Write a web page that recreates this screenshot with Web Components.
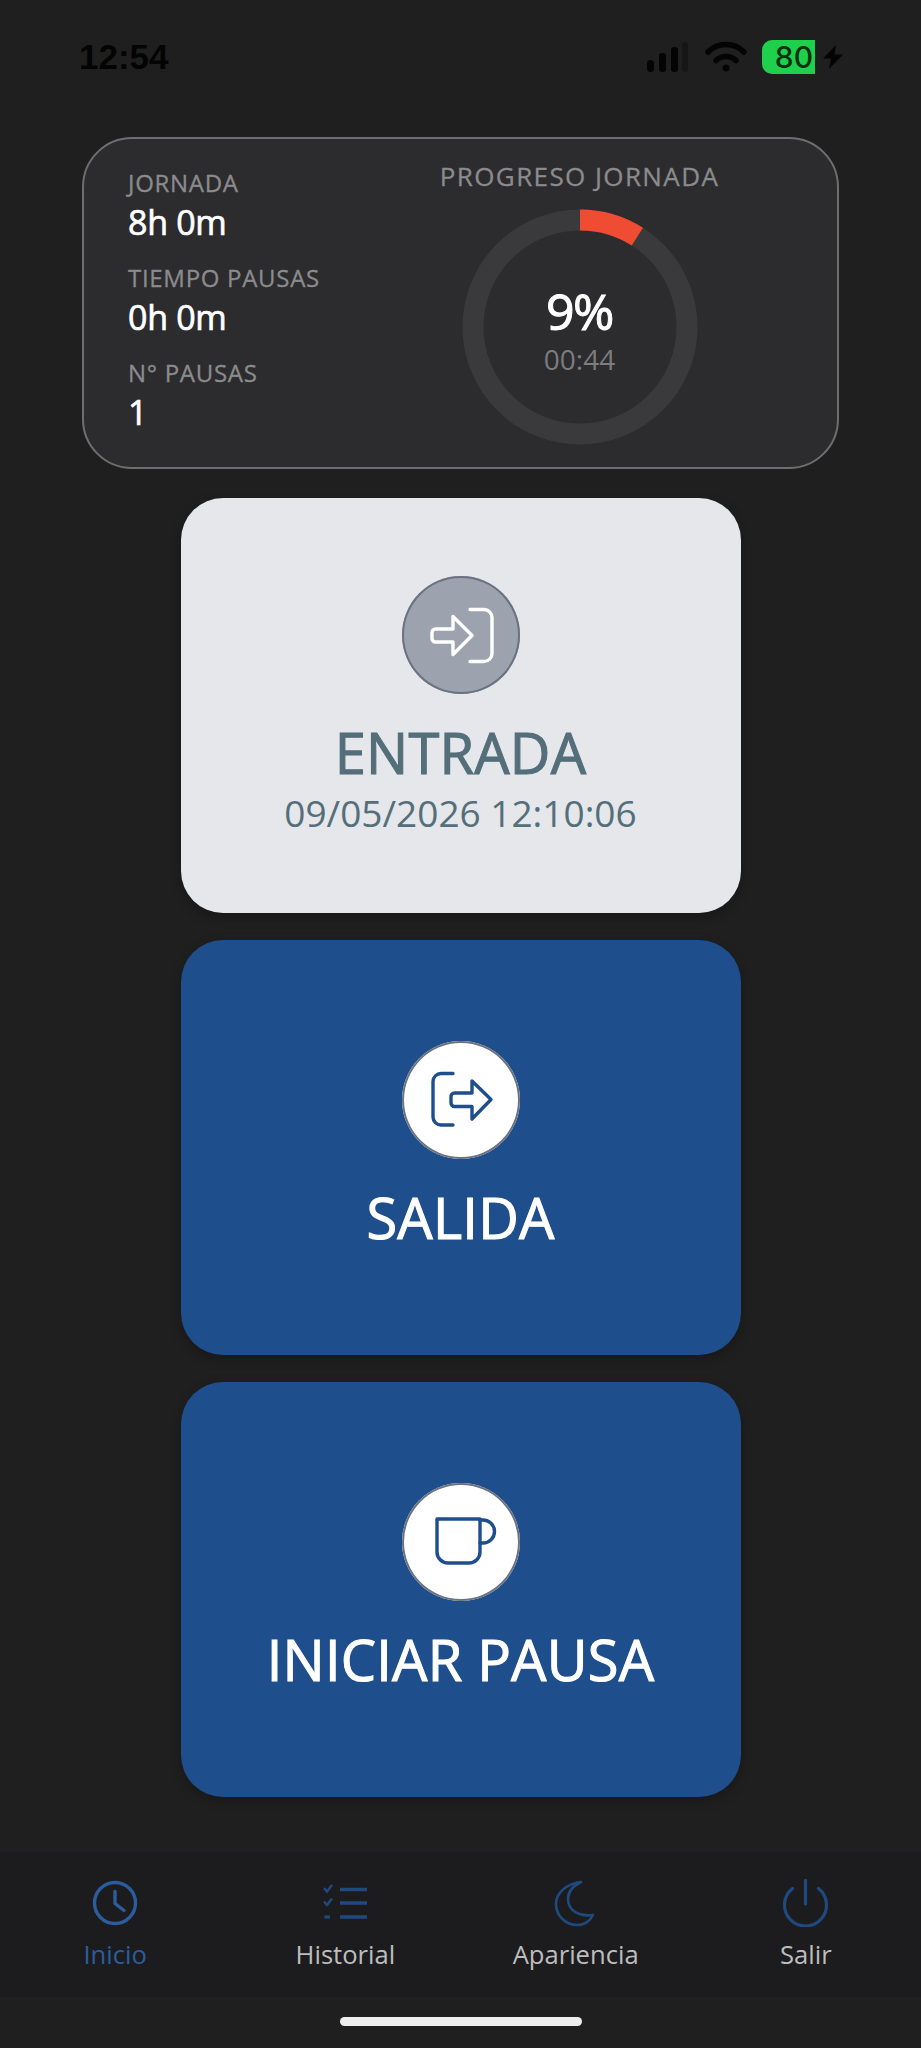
<!DOCTYPE html>
<html lang="es">
<head>
<meta charset="utf-8">
<title>Inicio</title>
<style>
  html, body { margin: 0; padding: 0; background: #1f1f1f; }
  body { font-family: "Open Sans", "Liberation Sans", sans-serif; }
</style>
</head>
<body>
<app-screen>
  <status-bar slot="status" time="12:54" battery="80"></status-bar>

  <summary-card>
    <stat-item label="JORNADA">8h 0m</stat-item>
    <stat-item label="TIEMPO PAUSAS">0h 0m</stat-item>
    <stat-item label="N° PAUSAS">1</stat-item>
    <progress-ring slot="progress" title-text="PROGRESO JORNADA" percent="9" elapsed="00:44"></progress-ring>
  </summary-card>

  <action-card tone="done" detail="09/05/2026 12:10:06">
    <svg slot="icon" width="118" height="118" viewBox="0 0 118 118" fill="none" stroke="#fff" stroke-width="3.4" stroke-linecap="round" stroke-linejoin="round">
      <path d="M33.5 53H51V40.5L70 59.5 51 78.500V66H33.500a3.500 3.500 0 0 1-3.500-3.500v-6a3.500 3.500 0 0 1 3.500-3.500Z"/>
      <path d="M68 33.500H82a8 8 0 0 1 8 8V77.500a8 8 0 0 1-8 8H68"/>
    </svg>
    ENTRADA
  </action-card>

  <action-card>
    <svg slot="icon" width="118" height="118" viewBox="0 0 118 118" fill="none" stroke="#1e4e8c" stroke-width="3.4" stroke-linecap="round" stroke-linejoin="round">
      <path d="M51 32.500H39a8 8 0 0 0-8 8V76a8 8 0 0 0 8 8H51"/>
      <path d="M52.500 52H70V40L89 58.500 70 78V65.500H52.500a3.500 3.500 0 0 1-3.500-3.500v-6.500a3.500 3.500 0 0 1 3.500-3.500Z"/>
    </svg>
    SALIDA
  </action-card>

  <action-card>
    <svg slot="icon" width="118" height="118" viewBox="0 0 118 118" fill="none" stroke="#1e4e8c" stroke-width="3.4" stroke-linecap="round" stroke-linejoin="round">
      <path d="M35 36H78V69a11 11 0 0 1-11 11H46a11 11 0 0 1-11-11Z"/>
      <path d="M78 37h3a11.500 11.500 0 0 1 0 23h-3"/>
    </svg>
    INICIAR PAUSA
  </action-card>

  <tab-bar slot="tabs">
    <nav-item active label="Inicio">
      <svg width="48" height="48" viewBox="0 0 48 48" fill="none" stroke="currentColor" stroke-width="3.4" stroke-linecap="round" stroke-linejoin="round">
        <circle cx="24" cy="24" r="20.500"/>
        <path d="M24 12.500V24.500L33 31.500"/>
      </svg>
    </nav-item>
    <nav-item label="Historial">
      <svg width="48" height="48" viewBox="0 0 48 48" fill="none" stroke="currentColor" stroke-width="3.4">
        <path d="M19 10.500H46M19 24H46M19 38H46"/>
        <path d="M3 9l3 3.500 5-6.500M3 22.500l3 3.500 5-6.500" stroke-width="2.400"/>
        <path d="M3.500 38H9" stroke-width="3"/>
      </svg>
    </nav-item>
    <nav-item label="Apariencia">
      <svg width="48" height="48" viewBox="0 0 48 48" fill="none" stroke="currentColor" stroke-width="2.600" stroke-linejoin="round">
        <path d="M29 3C14 5 4 14 4 25 4 37 14 46 25 46 32 46 38 42 41 36 28 38 16 32 16 20 16 13 21 7 29 3Z"/>
      </svg>
    </nav-item>
    <nav-item label="Salir">
      <svg width="48" height="48" viewBox="0 0 48 48" fill="none" stroke="currentColor" stroke-width="3.200" stroke-linecap="round">
        <path d="M10.500 9.500A21 21 0 1 0 36.500 9.500"/>
        <path d="M23.500 1.500V25"/>
      </svg>
    </nav-item>
  </tab-bar>
</app-screen>

<script>
class AppScreen extends HTMLElement {
  constructor() {
    super();
    this.attachShadow({ mode: 'open' });
    this.shadowRoot.innerHTML = `
      <style>
        :host {
          display: flex;
          flex-direction: column;
          width: 921px;
          height: 2048px;
          background: #1f1f1f;
          font-family: "Open Sans", "Liberation Sans", sans-serif;
        }
        .main {
          display: flex;
          flex-direction: column;
          align-items: center;
          gap: 27px;
        }
        .tabs {
          margin-top: auto;
        }
        .home {
          display: flex;
          justify-content: center;
          padding: 20px 0 22px;
        }
        .home span {
          width: 242px;
          height: 9px;
          border-radius: 5px;
          background: #eeeeee;
        }
      </style>
      <slot name="status"></slot>
      <div class="main"><slot></slot></div>
      <div class="tabs"><slot name="tabs"></slot></div>
      <div class="home"><span></span></div>`;
  }
}

class StatusBar extends HTMLElement {
  constructor() {
    super();
    this.attachShadow({ mode: 'open' });
    this.shadowRoot.innerHTML = `
      <style>
        :host {
          display: flex;
          justify-content: space-between;
          align-items: center;
          height: 113px;
          margin-bottom: 24px;
          padding: 0 78px 0 79px;
          color: #040404;
        }
        .time {
          font: 700 35px "Liberation Sans", Arial, sans-serif;
        }
        .icons {
          display: flex;
          align-items: center;
        }
        .battery {
          display: flex;
          justify-content: flex-end;
          align-items: center;
          box-sizing: border-box;
          width: 53px;
          height: 34px;
          margin: 0 8px 0 15px;
          padding-right: 2px;
          border-radius: 10px 0 0 10px;
          background: #1ed04c;
          color: #07300f;
          font: 500 30px Inter, sans-serif;
        }
        svg { display: block; }
      </style>
      <span class="time"></span>
      <div class="icons">
        <svg width="41" height="30" viewBox="0 0 41 30" fill="currentColor">
          <rect x="0" y="18" width="7" height="12" rx="3.500"/>
          <rect x="12" y="11" width="7" height="19" rx="3"/>
          <rect x="24" y="5" width="7" height="25" rx="3"/>
          <rect x="35" y="0" width="6" height="30" rx="3" opacity=".3"/>
        </svg>
        <svg style="margin-left:17px" width="42" height="31" viewBox="0 0 42 31" fill="none" stroke="currentColor" stroke-width="5.500" stroke-linecap="round">
          <path d="M3 11C12.500 1 29.500 1 39 11"/>
          <path d="M11 19.500C16.500 14 25.500 14 31 19.500"/>
          <circle cx="21" cy="27" r="3.500" fill="currentColor" stroke="none"/>
        </svg>
        <div class="battery"></div>
        <svg width="20" height="24" viewBox="0 0 20 24" fill="currentColor">
          <path d="M13 0L0 13.500H8L6 24 20 9.500H11.500Z"/>
        </svg>
      </div>`;
  }

  connectedCallback() {
    this.shadowRoot.querySelector('.time').textContent = this.getAttribute('time');
    this.shadowRoot.querySelector('.battery').textContent = this.getAttribute('battery');
  }
}

class SummaryCard extends HTMLElement {
  constructor() {
    super();
    this.attachShadow({ mode: 'open' });
    this.shadowRoot.innerHTML = `
      <style>
        :host {
          display: grid;
          grid-template-columns: 238px 1fr;
          box-sizing: border-box;
          width: 757px;
          height: 332px;
          margin-bottom: 2px;
          border: 2px solid #6e6e6e;
          border-radius: 50px;
          background: #2c2c2e;
        }
        .stats {
          display: flex;
          flex-direction: column;
          gap: 17px;
          padding: 29px 0 0 44px;
        }
      </style>
      <div class="stats"><slot></slot></div>
      <slot name="progress"></slot>`;
  }
}

// Open Sans has no medium cut here, so the medium look is a thin stroke on the regular
class StatItem extends HTMLElement {
  constructor() {
    super();
    this.attachShadow({ mode: 'open' });
    this.shadowRoot.innerHTML = `
      <style>
        :host { display: block; }
        .label {
          color: #8b8b8d;
          font-size: 24px;
          line-height: 30px;
          letter-spacing: 0.7px;
          white-space: nowrap;
          -webkit-text-stroke: 0.3px currentColor;
        }
        .value {
          color: #ffffff;
          font-size: 34px;
          line-height: 48px;
          letter-spacing: -0.3px;
          white-space: nowrap;
          -webkit-text-stroke: 0.7px currentColor;
        }
      </style>
      <div class="label"></div>
      <div class="value"><slot></slot></div>`;
  }

  connectedCallback() {
    this.shadowRoot.querySelector('.label').textContent = this.getAttribute('label');
  }
}

class ProgressRing extends HTMLElement {
  constructor() {
    super();
    this.attachShadow({ mode: 'open' });
    this.shadowRoot.innerHTML = `
      <style>
        :host {
          display: flex;
          flex-direction: column;
          align-items: center;
          padding-top: 22px;
        }
        .title {
          color: #8b8b8d;
          font-size: 26px;
          line-height: 30px;
          letter-spacing: 1.4px;
          white-space: nowrap;
          -webkit-text-stroke: 0.3px currentColor;
        }
        .ring {
          display: grid;
          place-items: center;
          margin-top: 18px;
        }
        .ring > * { grid-area: 1 / 1; }
        .center {
          display: flex;
          flex-direction: column;
          align-items: center;
          padding-top: 3px;
        }
        .percent {
          color: #ffffff;
          font-size: 50px;
          line-height: 60px;
          letter-spacing: -1.5px;
          -webkit-text-stroke: 1px currentColor;
        }
        .elapsed {
          color: #7c7c7e;
          font-size: 28px;
          line-height: 36px;
        }
        svg { display: block; transform: rotate(-90deg); }
      </style>
      <div class="title"></div>
      <div class="ring">
        <svg width="236" height="236" viewBox="0 0 236 236" fill="none" stroke-width="21">
          <circle cx="118" cy="118" r="107" stroke="#3a3a3c"/>
          <circle class="arc" cx="118" cy="118" r="107" stroke="#f04b33"/>
        </svg>
        <div class="center">
          <span class="percent"></span>
          <span class="elapsed"></span>
        </div>
      </div>`;
  }

  connectedCallback() {
    const percent = Number(this.getAttribute('percent'));
    const length = 2 * Math.PI * 107;
    const arc = this.shadowRoot.querySelector('.arc');
    arc.setAttribute('stroke-dasharray', `${length * percent / 100} ${length}`);
    this.shadowRoot.querySelector('.title').textContent = this.getAttribute('title-text');
    this.shadowRoot.querySelector('.percent').textContent = `${percent}%`;
    this.shadowRoot.querySelector('.elapsed').textContent = this.getAttribute('elapsed');
  }
}

class ActionCard extends HTMLElement {
  constructor() {
    super();
    this.attachShadow({ mode: 'open' });
    this.shadowRoot.innerHTML = `
      <style>
        :host {
          display: flex;
          flex-direction: column;
          justify-content: center;
          align-items: center;
          width: 560px;
          height: 415px;
          border-radius: 42px;
          background: #1e4e8c;
          box-shadow: 0 4px 12px rgba(0, 0, 0, 0.25);
          color: #ffffff;
          --circle-bg: #ffffff;
        }
        :host([tone="done"]) {
          background: #e5e7eb;
          color: #546e7a;
          --circle-bg: #9ca3af;
        }
        .circle {
          display: flex;
          box-sizing: border-box;
          width: 118px;
          height: 118px;
          margin-bottom: 21px;
          border-radius: 50%;
          background: var(--circle-bg);
          box-shadow: inset 0 0 0 2px #6b7280;
        }
        .title {
          font-size: 56px;
          line-height: 74px;
          letter-spacing: 0.2px;
          white-space: nowrap;
          -webkit-text-stroke: 1.1px currentColor;
        }
        .detail {
          margin-top: 2px;
          font-size: 37px;
          line-height: 44px;
          white-space: nowrap;
        }
        .detail:empty { display: none; }
      </style>
      <div class="circle"><slot name="icon"></slot></div>
      <div class="title"><slot></slot></div>
      <div class="detail"></div>`;
  }

  connectedCallback() {
    this.shadowRoot.querySelector('.detail').textContent = this.getAttribute('detail') || '';
  }
}

class TabBar extends HTMLElement {
  constructor() {
    super();
    this.attachShadow({ mode: 'open' });
    this.shadowRoot.innerHTML = `
      <style>
        :host {
          display: grid;
          grid-template-columns: repeat(4, 1fr);
          height: 145px;
          background: #1c1c1e;
        }
      </style>
      <slot></slot>`;
  }
}

class NavItem extends HTMLElement {
  constructor() {
    super();
    this.attachShadow({ mode: 'open' });
    this.shadowRoot.innerHTML = `
      <style>
        :host {
          display: flex;
          flex-direction: column;
          align-items: center;
          padding-top: 27px;
          color: #1f4a80;
        }
        :host([active]) { color: #2a5c9e; }
        .icon { height: 48px; }
        .label {
          margin-top: 11px;
          color: #bdbdbf;
          font-size: 25.6px;
          line-height: 34px;
          white-space: nowrap;
        }
        :host([active]) .label { color: #2a5c9e; }
      </style>
      <div class="icon"><slot></slot></div>
      <div class="label"></div>`;
  }

  connectedCallback() {
    this.shadowRoot.querySelector('.label').textContent = this.getAttribute('label');
  }
}

customElements.define('app-screen', AppScreen);
customElements.define('status-bar', StatusBar);
customElements.define('summary-card', SummaryCard);
customElements.define('stat-item', StatItem);
customElements.define('progress-ring', ProgressRing);
customElements.define('action-card', ActionCard);
customElements.define('tab-bar', TabBar);
customElements.define('nav-item', NavItem);
</script>
</body>
</html>
